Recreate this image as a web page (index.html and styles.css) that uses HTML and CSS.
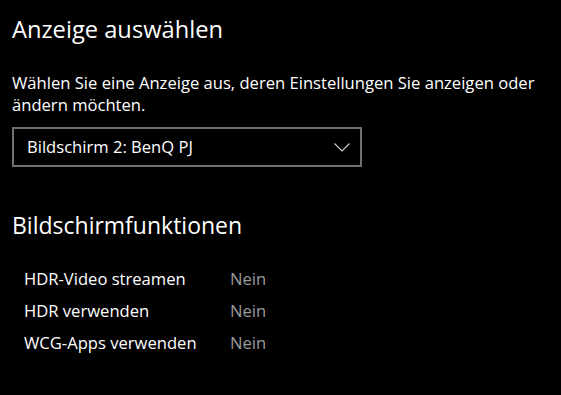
FILE: index.html
```html
<!DOCTYPE html>
<html lang="de">
<head>
<meta charset="utf-8">
<link rel="stylesheet" href="styles.css">
</head>
<body>
<main class="page">
  <h1 class="title">Anzeige auswählen</h1>
  <p class="desc">Wählen Sie eine Anzeige aus, deren Einstellungen Sie anzeigen oder ändern möchten.</p>
  <div class="select">
    <span class="select-text">Bildschirm 2: BenQ PJ</span>
    <svg class="chevron" width="16" height="9" viewBox="0 0 16 9"><path d="M0.5 0.5 L8 8 L15.5 0.5" fill="none" stroke="#d0d0d0" stroke-width="1.1"/></svg>
  </div>
  <h2 class="subtitle">Bildschirmfunktionen</h2>
  <div class="features">
    <div class="row"><span class="label">HDR-Video streamen</span><span class="value">Nein</span></div>
    <div class="row"><span class="label">HDR verwenden</span><span class="value">Nein</span></div>
    <div class="row"><span class="label">WCG-Apps verwenden</span><span class="value">Nein</span></div>
  </div>
</main>
</body>
</html>
```
FILE: styles.css
```css
html, body {
  margin: 0;
  padding: 0;
  background: #000;
}
body {
  color: #fff;
  font-family: "Open Sans", "Noto Sans", sans-serif;
}
.page {
  padding: 13px 0 0 12px;
}
.title {
  margin: 0;
  font-size: 23.7px;
  font-weight: 400;
  line-height: 32px;
}
.desc {
  margin: 27px 0 0;
  width: 530px;
  font-size: 16.6px;
  line-height: 22px;
}
.select {
  box-sizing: border-box;
  margin-top: 11px;
  width: 350px;
  height: 40px;
  border: 2px solid #707070;
  display: flex;
  align-items: center;
  justify-content: space-between;
  padding: 0 10px 0 13px;
}
.select-text {
  font-size: 16.6px;
  line-height: 36px;
}
.chevron {
  display: block;
}
.subtitle {
  margin: 43px 0 0;
  font-size: 23px;
  font-weight: 400;
  line-height: 30px;
}
.features {
  margin-top: 23px;
  padding-left: 12px;
}
.row {
  display: flex;
  font-size: 16.6px;
  line-height: 32px;
}
.label {
  width: 206px;
  flex: none;
}
.value {
  color: #999;
}
```
